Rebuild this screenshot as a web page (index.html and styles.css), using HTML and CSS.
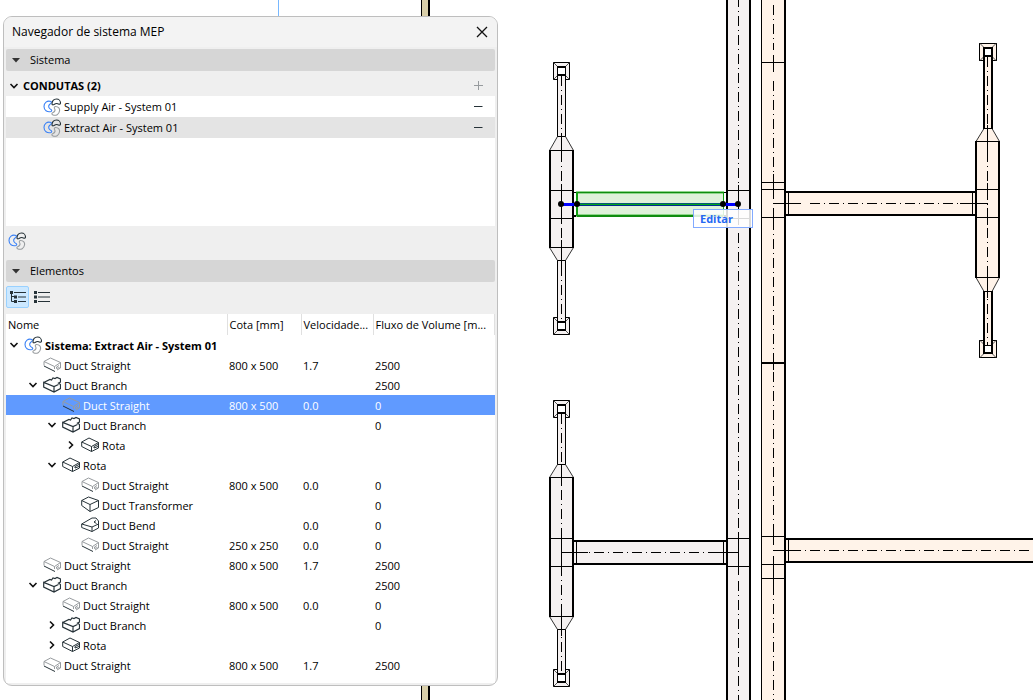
FILE: index.html
```html
<!DOCTYPE html>
<html lang="pt">
<head>
<meta charset="utf-8">
<title>Navegador de sistema MEP</title>
<link rel="stylesheet" href="styles.css">
</head>
<body>
<svg class="symbols" aria-hidden="true">
  <symbol id="mep" viewBox="0 0 18 18">
    <g fill="none" stroke-width="1.1" stroke-linejoin="round">
      <path class="ink-blue" d="M8 3.500C4 2 1 5 1 8.500C1 12 4 14.500 8 13.500C9 13 9 12 8 11.500C5.500 10.500 5 8 6.500 6.500C8 5.500 9 4.500 8 3.500Z"/>
      <path class="ink-dark" d="M9 6C9 3 10.500 1 13.500 1C16 1 17.500 3 17.500 5C17.500 6 16.500 6.500 15.500 6C14 5 12.500 5.500 11 6.500C10 7 9 7 9 6Z"/>
      <path class="ink-grey" d="M12.500 8.500C15.500 8.500 17 10.500 16.500 13C16 16.500 13 18 10 17C8.500 16.500 8.500 15 10 14.500C12 13.500 12.500 12 11.500 10.500C11 9.500 11.500 8.500 12.500 8.500Z"/>
    </g>
  </symbol>
  <symbol id="straight" viewBox="0 0 18 18">
    <path class="ink-grey" fill="none" d="M1 5.500L7.500 2L17.500 6.500L11.500 10.500L1 5.500V9.500M11.500 10.500V13M17.500 6.500V12L14 14M16 9.500L13.500 11V12.500L16.500 11.500"/>
    <path class="ink-dark" fill="none" d="M1 10L12 15.500"/>
  </symbol>
  <symbol id="route" viewBox="0 0 18 18">
    <path class="ink-dark" fill="none" d="M.700 6L8 2L17.500 6.500L10.500 10.500ZM.700 6V10.500L10.500 15.500L17.500 12V6.500M10.500 10.500V15.500M17 8.500L13 10.500V12L17 10.500"/>
  </symbol>
  <symbol id="branch" viewBox="0 0 18 18">
    <path class="ink-dark" fill="none" stroke-width="1.200" d="M.700 6.500L7 3.500L8.500 4L10 2L12 2.500L14 1.500L17.500 3V6L15.500 7L17.500 8.500V12.500L11 16L.700 11V6.500L11 10.500L15.500 8.500M11 10.500V16"/>
  </symbol>
  <symbol id="transformer" viewBox="0 0 18 18">
    <path class="ink-dark" fill="none" d="M.700 4.500L7.500 1L17.500 4.500L9 8.500ZM.700 4.500V9.500L9 15.500V8.500M9 15.500L17.500 11.500V4.500"/>
  </symbol>
  <symbol id="bend" viewBox="0 0 18 18">
    <path class="ink-dark" fill="none" d="M.700 8L11 2L15 2L17.500 5V12L11 15.500L.700 11.500V8L11 11V15.500M11 11L17.500 8M15 4.500L13 6L15.500 7.500"/>
  </symbol>
  <symbol id="down" viewBox="0 0 10 10"><path class="ink-black" fill="none" d="M1.500 3L5 6.500L8.500 3"/></symbol>
  <symbol id="right" viewBox="0 0 10 10"><path class="ink-black" fill="none" d="M3 1.500L6.500 5L3 8.500"/></symbol>
  <symbol id="tri" viewBox="0 0 10 10"><path fill="#333" d="M1 3H9L5 7.500Z"/></symbol>
  <symbol id="minus" viewBox="0 0 10 10"><path class="ink-dark" d="M1 4.500H9.500"/></symbol>
  <symbol id="plus" viewBox="0 0 10 10"><path class="ink-grey" d="M1 4.500H10M5.500 0V9"/></symbol>
</svg>

<main class="workspace">
  <svg class="plan" role="img" aria-label="Planta de condutas">
    <rect x="421" width="9" height="100%" fill="#000"/>
    <rect x="422" width="6" height="100%" fill="#d9cfa9"/>
    <rect x="278" width="1" height="40" fill="#78b8ff"/>

    <defs>
      <g id="diffuser">
        <rect x="-8" y="0" width="16" height="17"/>
        <path class="hip" d="M-8 0L-4 4M8 0L4 4M-8 17L-4 13M8 17L4 13"/>
        <rect class="throat" x="-4" y="4" width="8" height="9"/>
        <path class="bold" d="M-4.500 4.500H4.500M-4.500 12.500H4.500"/>
      </g>
      <g id="diffuser-bold">
        <rect x="-8.500" y="0" width="17" height="17"/>
        <path class="hip" d="M-8 0L-4 4M8 0L4 4M-8 17L-4 13M8 17L4 13"/>
        <rect class="bold throat" x="-4" y="4.500" width="8" height="8"/>
      </g>
    </defs>

    <g class="duct supply">
      <rect class="fill" x="727" width="23" height="100%"/>
      <path class="bold" d="M727 0V5000M750 0V5000"/>
      <path d="M727 190.500H750M727 218.500H750M727 538.500H750M727 566.500H750"/>
      <path class="axis" d="M738.500 -3V190"/>
      <path class="axis" d="M738.500 233V538"/>
      <path class="axis" d="M738.500 581V5000"/>
      <path d="M738.500 185V225M738.500 532V575"/>

      <use href="#diffuser" x="561.500" y="62.500"/>
      <use href="#diffuser" x="561.500" y="317.500"/>
      <path class="fill" d="M557.500 76V136.500L549.500 150.500V247.500L557.500 260.500V321H565.500V260.500L573.500 247.500V150.500L565.500 136.500V76Z"/>
      <path d="M557.500 75V136.500H565.500V75M557.500 321V260.500H565.500V321M549.500 150.500H573.500M549.500 247.500H573.500M550 190.500H573M550 218.500H573"/>
      <path class="slope" d="M557.500 136.500L549.500 150.500M565.500 136.500L573.500 150.500M549.500 247.500L557.500 260.500M573.500 247.500L565.500 260.500"/>
      <path class="bold" d="M550 150V248M573 150V248"/>
      <path class="axis" d="M561.500 76V321"/>
      <path d="M561.500 136V160M561.500 184V224M561.500 240V266"/>

      <use href="#diffuser" x="561.500" y="400.500"/>
      <use href="#diffuser" x="561.500" y="669.500"/>
      <path class="fill" d="M557.500 414V464.500L549.500 477.500V616.500L557.500 629.500V673H565.500V629.500L573.500 616.500V477.500L565.500 464.500V414Z"/>
      <path d="M557.500 413V464.500H565.500V413M557.500 673V629.500H565.500V673M549.500 477.500H573.500M549.500 616.500H573.500M550 538.500H573M550 566.500H573"/>
      <path class="slope" d="M557.500 464.500L549.500 477.500M565.500 464.500L573.500 477.500M549.500 616.500L557.500 629.500M573.500 616.500L565.500 629.500"/>
      <path class="bold" d="M550 477V617M573 477V617"/>
      <path class="axis" d="M561.500 414V673"/>
      <path d="M561.500 464V486M561.500 532V572M561.500 610V636"/>

      <rect class="fill" x="574" y="541" width="152" height="23"/>
      <path class="bold" d="M573 541H727M573 564H727"/>
      <path d="M576.500 541V564M723.500 541V564M561 552.500H588M712 552.500H739"/>
      <path class="axis" d="M588 552.500H712" stroke-dashoffset="-6"/>
    </g>

    <g class="duct extract">
      <rect class="fill" x="761" width="24" height="100%"/>
      <path d="M761.500 0V5000M761 62.500H785M761 182.500H785M761 189.500H785M761 217.500H785M761 536.500H785M761 564.500H785M761 578.500H785"/>
      <path class="bold" d="M785 0V5000M761 363H785"/>
      <path class="axis" d="M773.500 5V50"/>
      <path class="axis" d="M773.500 80.500V198"/>
      <path class="axis" d="M773.500 219.500V536"/>
      <path class="axis" d="M773.500 584.500V5000"/>
      <path d="M773.500 55V72M773.500 174V199M773.500 208V226M773.500 355V370M773.500 530V545M773.500 556V594"/>

      <use href="#diffuser-bold" x="988" y="43.500"/>
      <use href="#diffuser-bold" x="988" y="340.500"/>
      <path class="fill" d="M984 57V128.500L976 141.500V277.500L984 291V345H992V291L999.500 277.500V141.500L992 128.500V57Z"/>
      <path class="slope" d="M984 128.500L976 141.500M992 128.500L999.500 141.500M976 277.500L984 291.500M999.500 277.500L992 291.500"/>
      <path class="bold" d="M984 56V129M992 56V129M976 141V278M999 141V278M984 291V345M992 291V345"/>
      <path d="M983 128.500H993M975 141.500H1000M976 189.500H999M976 217.500H999M975 277.500H1000M983 291.500H993"/>
      <path class="axis" d="M987.500 57V345"/>
      <path d="M987.500 125V152M987.500 183V199M987.500 208V225M987.500 270V298"/>

      <rect class="fill" x="786" y="192" width="189" height="23"/>
      <path class="bold" d="M785 192H976M785 215H976"/>
      <path d="M788.500 192V215M972.500 192V215M773 203.500H801M960 203.500H988"/>
      <path class="axis" d="M809.500 203.500H960"/>

      <rect class="fill" x="786" y="539" width="5000" height="23"/>
      <path class="bold" d="M785 539H5000M785 562H5000"/>
      <path d="M788.500 539V562M773 550.500H801"/>
      <path class="axis" d="M796 550.500H5000" stroke-dashoffset="5"/>
    </g>

    <g class="selection">
      <path class="stub" d="M573 192.500H577M723 192.500H727"/>
      <path class="stub bold" d="M573 216H577M723 216H727"/>
      <rect x="576" y="191" width="148" height="26" fill="#8ed68a"/>
      <rect x="577" y="192" width="146" height="25" fill="#108c10"/>
      <rect x="578" y="193" width="145" height="22" fill="#8ed68a"/>
      <rect x="578" y="194" width="145" height="20" fill="#dff1da"/>
      <rect x="576" y="192" width="2" height="24" fill="#10a010"/>
      <rect x="723" y="192" width="1" height="24" fill="#10a010"/>
      <rect x="561" y="203" width="177" height="3" fill="#0000ff"/>
      <rect x="577" y="203" width="146" height="1" fill="#085878"/>
      <rect x="577" y="204" width="146" height="1" fill="#00a818"/>
      <rect x="577" y="205" width="146" height="1" fill="#002a90"/>
      <circle cx="561" cy="204" r="3"/><circle cx="577" cy="204" r="3"/><circle cx="723" cy="204" r="3"/><circle cx="738" cy="204" r="3"/>
    </g>
  </svg>

  <button class="edit-tag" type="button">Editar</button>

  <section class="palette" aria-labelledby="palette-title">
    <header class="titlebar">
      <h1 id="palette-title">Navegador de sistema MEP</h1>
      <button class="close" type="button" aria-label="Fechar"><svg viewBox="0 0 12 12"><path d="M1 1L11 11M11 1L1 11"/></svg></button>
    </header>

    <button class="section-head" type="button"><svg class="mark"><use href="#tri"/></svg>Sistema</button>
    <div class="group">
      <button class="mini" type="button" aria-label="Recolher"><svg class="mark"><use href="#down"/></svg></button>
      <h2>CONDUTAS (2)</h2>
      <button class="mini" type="button" aria-label="Adicionar"><svg class="mark"><use href="#plus"/></svg></button>
    </div>
    <ul class="systems">
      <li><svg class="icon"><use href="#mep"/></svg><span>Supply Air - System 01</span><button class="mini" type="button" aria-label="Remover Supply Air"><svg class="mark"><use href="#minus"/></svg></button></li>
      <li class="current"><svg class="icon"><use href="#mep"/></svg><span>Extract Air - System 01</span><button class="mini" type="button" aria-label="Remover Extract Air"><svg class="mark"><use href="#minus"/></svg></button></li>
    </ul>
    <div class="tools"><button class="mini" type="button" aria-label="Sistema MEP"><svg class="icon"><use href="#mep"/></svg></button></div>

    <button class="section-head" type="button"><svg class="mark"><use href="#tri"/></svg>Elementos</button>
    <div class="views">
      <button class="view on" type="button" aria-label="Vista em árvore"><svg viewBox="0 0 17 14"><path d="M2.500 1V11.500H6M2.500 6.500H6M5 2.500H17M9 7H17M9 11.500H17"/><path class="solid" d="M1 1h3v3H1zM5 5.500h3v3H5zM5 10h3v3H5z"/></svg></button>
      <button class="view" type="button" aria-label="Vista em lista"><svg viewBox="0 0 17 14"><path d="M5 2.500H17M5 7H17M5 11.500H17"/><path class="solid" d="M1 1h3v3H1zM1 5.500h3v3H1zM1 10h3v3H1z"/></svg></button>
    </div>

    <div class="sheet">
      <table>
        <colgroup><col class="c-name"><col class="c-size"><col class="c-speed"><col></colgroup>
        <thead><tr><th scope="col">Nome</th><th scope="col">Cota [mm]</th><th scope="col">Velocidade...</th><th scope="col">Fluxo de Volume [m...</th></tr></thead>
        <tbody>
          <tr class="root"><td><div class="node"><button class="twist" type="button" aria-label="Recolher"><svg class="mark"><use href="#down"/></svg></button><svg class="icon"><use href="#mep"/></svg><span>Sistema: Extract Air - System 01</span></div></td><td></td><td></td><td></td></tr>
          <tr><td><div class="node l1"><span class="twist"></span><svg class="icon"><use href="#straight"/></svg><span>Duct Straight</span></div></td><td>800 x 500</td><td>1.7</td><td>2500</td></tr>
          <tr><td><div class="node l1"><button class="twist" type="button" aria-label="Recolher"><svg class="mark"><use href="#down"/></svg></button><svg class="icon"><use href="#branch"/></svg><span>Duct Branch</span></div></td><td></td><td></td><td>2500</td></tr>
          <tr class="selected"><td><div class="node l2"><span class="twist"></span><svg class="icon"><use href="#straight"/></svg><span>Duct Straight</span></div></td><td>800 x 500</td><td>0.0</td><td>0</td></tr>
          <tr><td><div class="node l2"><button class="twist" type="button" aria-label="Recolher"><svg class="mark"><use href="#down"/></svg></button><svg class="icon"><use href="#branch"/></svg><span>Duct Branch</span></div></td><td></td><td></td><td>0</td></tr>
          <tr><td><div class="node l3"><button class="twist" type="button" aria-label="Expandir"><svg class="mark"><use href="#right"/></svg></button><svg class="icon"><use href="#route"/></svg><span>Rota</span></div></td><td></td><td></td><td></td></tr>
          <tr><td><div class="node l2"><button class="twist" type="button" aria-label="Recolher"><svg class="mark"><use href="#down"/></svg></button><svg class="icon"><use href="#route"/></svg><span>Rota</span></div></td><td></td><td></td><td></td></tr>
          <tr><td><div class="node l3"><span class="twist"></span><svg class="icon"><use href="#straight"/></svg><span>Duct Straight</span></div></td><td>800 x 500</td><td>0.0</td><td>0</td></tr>
          <tr><td><div class="node l3"><span class="twist"></span><svg class="icon"><use href="#transformer"/></svg><span>Duct Transformer</span></div></td><td></td><td></td><td>0</td></tr>
          <tr><td><div class="node l3"><span class="twist"></span><svg class="icon"><use href="#bend"/></svg><span>Duct Bend</span></div></td><td></td><td>0.0</td><td>0</td></tr>
          <tr><td><div class="node l3"><span class="twist"></span><svg class="icon"><use href="#straight"/></svg><span>Duct Straight</span></div></td><td>250 x 250</td><td>0.0</td><td>0</td></tr>
          <tr><td><div class="node l1"><span class="twist"></span><svg class="icon"><use href="#straight"/></svg><span>Duct Straight</span></div></td><td>800 x 500</td><td>1.7</td><td>2500</td></tr>
          <tr><td><div class="node l1"><button class="twist" type="button" aria-label="Recolher"><svg class="mark"><use href="#down"/></svg></button><svg class="icon"><use href="#branch"/></svg><span>Duct Branch</span></div></td><td></td><td></td><td>2500</td></tr>
          <tr><td><div class="node l2"><span class="twist"></span><svg class="icon"><use href="#straight"/></svg><span>Duct Straight</span></div></td><td>800 x 500</td><td>0.0</td><td>0</td></tr>
          <tr><td><div class="node l2"><button class="twist" type="button" aria-label="Expandir"><svg class="mark"><use href="#right"/></svg></button><svg class="icon"><use href="#branch"/></svg><span>Duct Branch</span></div></td><td></td><td></td><td>0</td></tr>
          <tr><td><div class="node l2"><button class="twist" type="button" aria-label="Expandir"><svg class="mark"><use href="#right"/></svg></button><svg class="icon"><use href="#route"/></svg><span>Rota</span></div></td><td></td><td></td><td></td></tr>
          <tr><td><div class="node l1"><span class="twist"></span><svg class="icon"><use href="#straight"/></svg><span>Duct Straight</span></div></td><td>800 x 500</td><td>1.7</td><td>2500</td></tr>
        </tbody>
      </table>
    </div>
  </section>
</main>
</body>
</html>
```
FILE: styles.css
```css
* { box-sizing: border-box; }
body {
  margin: 0;
  background: #fff;
  color: #000;
  font: 11px/20px "Open Sans", "Noto Sans", sans-serif;
}
button {
  margin: 0;
  padding: 0;
  border: 0;
  background: none;
  color: inherit;
  font: inherit;
}
.symbols { position: absolute; width: 0; height: 0; }

.ink-blue { stroke: #3b82f6; }
.ink-dark { stroke: #263238; }
.ink-grey { stroke: #979b9e; }
.ink-black { stroke: #111; stroke-width: 1.6; }

/* drawing area */
.workspace { position: relative; min-height: 100vh; overflow: hidden; }
.plan { position: absolute; inset: 0; width: 100%; height: 100%; shape-rendering: crispEdges; }
.duct { stroke: #000; stroke-width: 1; fill: none; }
.supply { --tint: #f5f1f1; }
.extract { --tint: #fff3e9; }
.duct .fill { fill: var(--tint); stroke: none; }
.duct use { fill: var(--tint); }
.bold { stroke-width: 2; }
.throat { fill: #fff; }
.hip { stroke: #555; shape-rendering: auto; }
.slope { stroke: #333; shape-rendering: auto; }
.axis { stroke-dasharray: 10 4 1 4; }
.stub { stroke: #000; }
.selection circle { shape-rendering: auto; }

.edit-tag {
  position: absolute;
  left: 693px;
  top: 209px;
  width: 60px;
  height: 19px;
  padding-left: 6px;
  border: 1px solid #82aaff;
  background: rgba(255, 255, 255, .85);
  color: #2468f2;
  font-weight: 700;
  line-height: 17px;
  text-align: left;
}

/* floating palette */
.palette {
  position: absolute;
  left: 3px;
  top: 16px;
  width: 495px;
  padding: 0 2px 2px;
  border: 1px solid #bebebe;
  border-radius: 9px;
  background: #efefef;
  overflow: hidden;
}
.titlebar {
  display: flex;
  align-items: center;
  justify-content: space-between;
  height: 30px;
  margin: 0 -2px 2px;
  padding: 0 9px 0 8px;
  background: #f3f3f3;
}
h1 { margin: 0; font-size: 12px; font-weight: 400; }
.close { display: flex; }
.close svg { width: 12px; height: 12px; stroke: #111; stroke-width: 1.3; }
.section-head {
  display: flex;
  align-items: center;
  gap: 9px;
  width: 100%;
  height: 22px;
  padding-left: 5px;
  border-radius: 2px;
  background: #d6d6d6;
  font-weight: 500;
}
.mark { display: block; flex: none; width: 10px; height: 10px; }
.icon { display: block; flex: none; width: 18px; height: 18px; }
.mini { display: flex; flex: none; }
.group {
  display: flex;
  align-items: center;
  gap: 4px;
  height: 25px;
  padding: 4px 12px 0 3px;
}
h2 { flex: 1; margin: 0; font-size: 11px; font-weight: 700; }
.systems { min-height: 130px; margin: 0; padding: 0; background: #fff; list-style: none; }
.systems li {
  display: flex;
  align-items: center;
  gap: 3px;
  height: 21px;
  padding: 0 12px 0 37px;
}
.systems span { flex: 1; }
.systems .current { background: #e4e4e4; }
.tools { display: flex; align-items: center; height: 34px; padding: 0 2px 4px; }
.views { display: flex; align-items: center; gap: 1px; height: 32px; padding-bottom: 2px; }
.view {
  display: grid;
  place-items: center;
  width: 23px;
  height: 22px;
  border: 1px solid transparent;
  border-radius: 2px;
}
.view.on { border-color: #99d1ff; background: #cce8ff; }
.view svg { width: 17px; height: 14px; fill: none; stroke: #263238; }
.view .solid { fill: #263238; stroke: none; }

/* element tree */
.sheet { padding-bottom: 8px; background: #fff; }
table { width: 100%; border-collapse: collapse; table-layout: fixed; }
.c-name { width: 221px; }
.c-size { width: 74px; }
.c-speed { width: 72px; }
th {
  height: 21px;
  padding: 0 0 0 2px;
  border-right: 1px solid #e0e0e0;
  font-size: 11px;
  font-weight: 400;
  line-height: 20px;
  text-align: left;
  white-space: nowrap;
}
td { height: 20px; padding: 2px 0 0 2px; line-height: 18px; white-space: nowrap; }
td:first-child { padding: 0; }
.node { display: flex; align-items: center; height: 20px; }
.node span { padding-top: 2px; }
.l1 { padding-left: 19px; }
.l2 { padding-left: 38px; }
.l3 { padding-left: 57px; }
.twist { display: grid; place-items: center; flex: none; width: 16px; height: 16px; }
.node .icon { margin: 0 3px 0 2px; }
.root { font-weight: 700; }
.selected { background: #609aff; color: #fff; }
.selected .ink-grey { stroke: #8a8f99; }
```
